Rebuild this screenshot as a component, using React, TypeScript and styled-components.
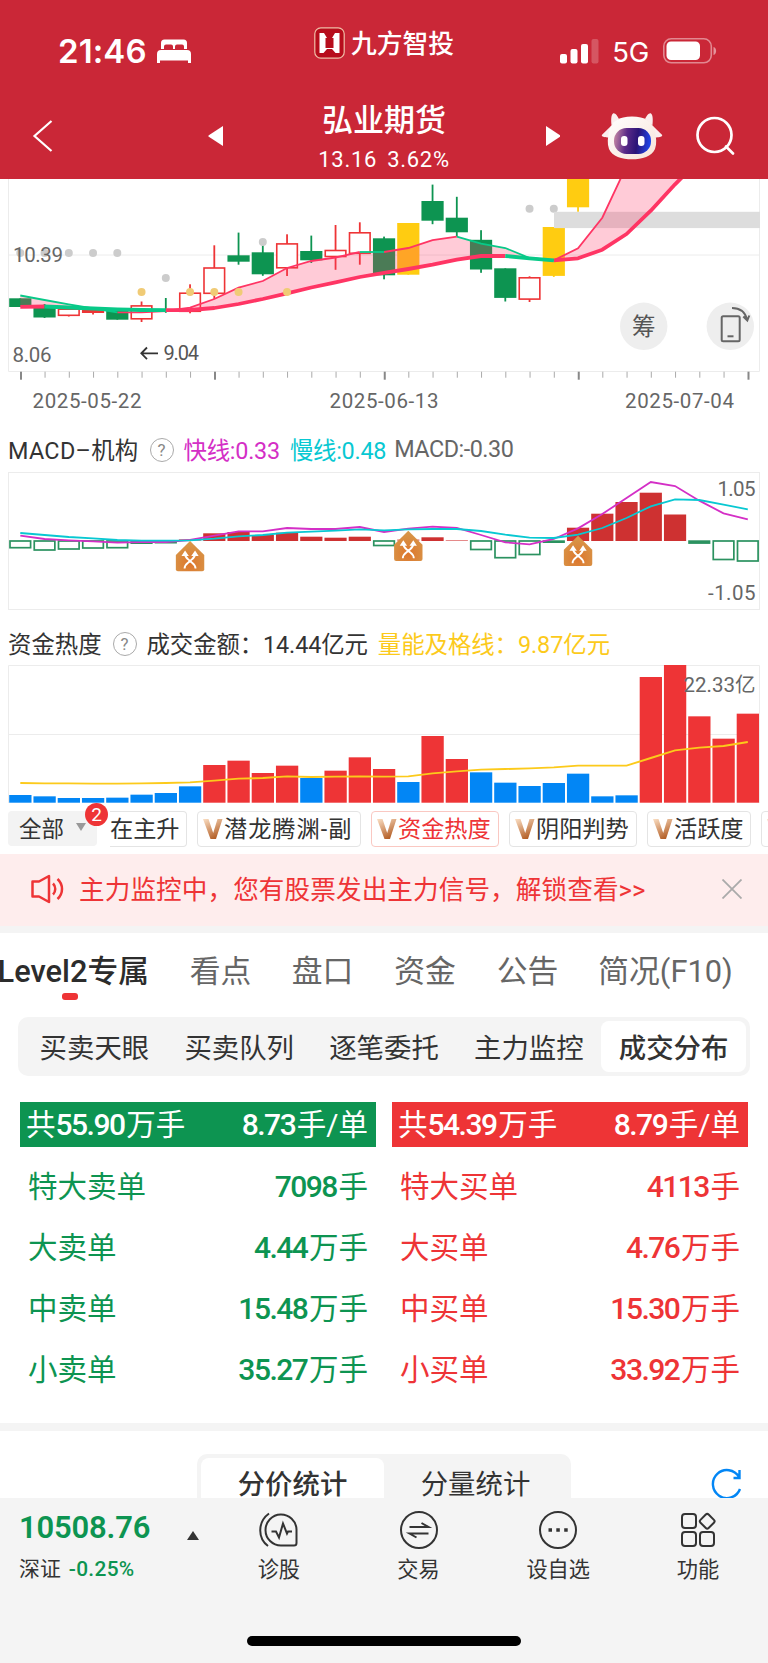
import React from 'react';
import styled, { createGlobalStyle } from 'styled-components';

const GlobalStyle = createGlobalStyle`
    * { box-sizing: border-box; }
    body {
        margin: 0;
        background: #fff;
        color: #333;
        font-family: Roboto, "Noto Sans CJK SC", sans-serif;
    }
    svg { display: block; flex-shrink: 0; }
`;

const GREEN = '#0d9451';
const RED = '#ee3436';
const PINK = '#ff3564';
const MINT = '#08c988';

// x of the center of bar i, shared by the three charts
const cx = (i: number) => 20.3 + i * 24.25;

type Candle = { c: string; top: number; bottom: number; high: number; low: number };

const candle = (c: string, top: number, bottom: number, high: number, low: number): Candle => ({ c, top, bottom, high, low });

const candles: Candle[] = [
    candle('g', 298.3, 307, 298.3, 307),
    candle('g', 308, 317.5, 304, 318),
    candle('r', 309, 315.5, 309, 316.5),
    candle('r', 310.6, 312.4, 308, 314.5),
    candle('g', 311, 319.7, 311, 319.7),
    candle('r', 305.7, 319, 301.5, 322),
    candle('g', 309, 310.5, 298, 312.8),
    candle('r', 293, 311.5, 284.3, 313.3),
    candle('r', 267.8, 293.5, 245.3, 299),
    candle('g', 255.3, 261.7, 232.6, 264.7),
    candle('g', 252.3, 274.3, 243.3, 275.8),
    candle('r', 243.7, 268, 234.3, 276),
    candle('g', 251, 260.3, 235.6, 263),
    candle('r', 250.3, 256.7, 225, 269.8),
    candle('r', 232.6, 253.5, 222.3, 264.7),
    candle('g', 238.3, 275.3, 236.6, 279.3),
    candle('y', 223, 274.7, 223, 274.7),
    candle('g', 201, 220.7, 184.6, 224.2),
    candle('g', 217.7, 232.3, 196.8, 236.5),
    candle('g', 239.8, 269.5, 230.2, 272.8),
    candle('g', 268.3, 297.9, 268.3, 301.5),
    candle('r', 277.6, 299.3, 276.3, 302),
    candle('y', 227, 275.9, 227, 276.9),
    candle('y', 179, 207.3, 179, 211.8),
];

const fastBand = [295.5, 300, 304.3, 308.5, 312.3, 312.3, 311, 307.7, 299, 287.7, 281, 268, 261, 257.5, 252, 252, 248, 240.2, 236.7, 243.7, 248, 258, 260.3, 248.3, 217.7, 166];
const slowBand = [306.9, 306.5, 307.5, 308.5, 309.3, 310, 310.2, 310, 308, 304, 299, 293.3, 287.5, 282.3, 277, 272.8, 269, 264.7, 259.7, 256, 256, 258.3, 260.3, 258.3, 249.7, 234, 210.7, 184.3, 160];

const path = (ys: number[], from = 0, to = ys.length - 1) =>
    ys.slice(from, to + 1).map((y, k) => `${k ? 'L' : 'M'}${cx(from + k)} ${y}`).join(' ');

const area = (from: number, to: number) => {
    let d = path(fastBand, from, Math.min(to, fastBand.length - 1));
    for (let i = Math.min(to, slowBand.length - 1); i >= from; i--) d += ` L${cx(i)} ${slowBand[i]}`;
    return d + ' Z';
};

const candleColor = (c: string) => (c === 'g' ? GREEN : c === 'y' ? '#ffcc11' : RED);

const KLineChart = () => (
    <svg width="768" height="249" viewBox="0 179 768 249">
        <path d="M8.5 179V371.5H759.5V179M8.5 255H759.5" fill="none" stroke="#ececec" />
        {[0, 1, 2, 3, 4].map(i => <circle key={i} cx={cx(i)} cy="253" r="4" fill="#ccc" />)}
        <circle cx={cx(6)} cy="278" r="4" fill="#ccc" />
        <circle cx={cx(21)} cy="208.8" r="4" fill="#ccc" />
        <circle cx={cx(22)} cy="208.8" r="4" fill="#ccc" />
        <text x="13" y="262" fontSize="20.5" fill="#666" textLength="50">10.39</text>
        {candles.map((k, i) => (
            <g key={i}>
                <rect x={cx(i) - 0.9} y={k.high} width="1.8" height={k.low - k.high} fill={candleColor(k.c)} />
                {k.c === 'r' ? (
                    <rect x={cx(i) - 10.3} y={k.top + 0.2} width="20.6" height={k.bottom - k.top - 0.4} fill="#fff" stroke={RED} strokeWidth="1.6" />
                ) : (
                    i !== 6 && <rect x={cx(i) - 11.1} y={k.top} width="22.2" height={k.bottom - k.top} fill={candleColor(k.c)} />
                )}
            </g>
        ))}
        <circle cx={cx(10)} cy="242" r="4" fill="#ccc" />
        <rect x="554" y="211.8" width="206" height="16.3" fill="#ddd" />
        <path d={area(0, 3)} fill={PINK} fillOpacity=".26" />
        <path d={area(6, 22)} fill={PINK} fillOpacity=".26" />
        <path d={area(22, 28)} fill={PINK} fillOpacity=".26" />
        <g fill="none" strokeWidth="1.8">
            <path d={path(fastBand, 4, 14)} stroke={PINK} />
            <path d={path(fastBand, 15, 18)} stroke={PINK} />
            <path d={path(fastBand, 22)} stroke={PINK} />
            <path d={path(fastBand, 0, 4)} stroke={MINT} />
            <path d={path(fastBand, 14, 15)} stroke={MINT} />
            <path d={path(fastBand, 18, 22)} stroke={MINT} />
        </g>
        <g fill="none" strokeWidth="3.8" strokeLinejoin="round">
            <path d={path(slowBand, 0, 1)} stroke={PINK} />
            <path d={path(slowBand, 6, 20)} stroke={PINK} />
            <path d={path(slowBand, 22)} stroke={PINK} />
            <path d={path(slowBand, 1, 6)} stroke={MINT} />
            <path d={path(slowBand, 20, 22)} stroke={MINT} />
        </g>
        {[5, 7, 8, 9, 11].map(i => <circle key={i} cx={cx(i)} cy="292" r="4" fill="#f0cb76" />)}
        <g fill="#666" fontSize="20.5">
            <text x="12.5" y="361.5" textLength="39">8.06</text>
            <text x="163.5" y="360" fill="#555" fontSize="20" textLength="35.5">9.04</text>
            <text x="32.5" y="408" textLength="109">2025-05-22</text>
            <text x="329.5" y="408" textLength="109">2025-06-13</text>
            <text x="625" y="408" textLength="109">2025-07-04</text>
        </g>
        <path d="M158 353.3H141.5M147 347.5l-5.7 5.8 5.7 5.8" fill="none" stroke="#333" strokeWidth="1.8" />
        {Array.from({ length: 31 }, (_, i) => (
            [0, 8, 15, 23, 30].includes(i)
                ? <rect key={i} x={cx(i) - 0.3} y="371.7" width="2" height="8" fill="#888" />
                : <rect key={i} x={cx(i)} y="371.7" width="1" height="6" fill="#aaa" />
        ))}
        <circle cx="643.7" cy="326.3" r="23.7" fill="#eee" />
        <text x="643.7" y="334.8" fontSize="23.5" fill="#555" textAnchor="middle">筹</text>
        <circle cx="730.3" cy="326.3" r="23.7" fill="#eee" />
        <g fill="none" stroke="#666" strokeWidth="2">
            <rect x="721.7" y="316.2" width="18" height="25" rx="1.5" />
            <path d="M727.5 336.3h6" />
            <path d="M732 308c7.5 0 13 3.5 15 11.5M743.3 316.5l4 4 2-5" />
        </g>
    </svg>
);

// y of the bar's far end and its kind: g hollow green, G solid green, r red, p pale red
const macdBars: [number, string][] = [
    [547.7, 'g'], [550, 'g'], [549, 'g'], [548, 'g'], [547.7, 'g'], [544, 'G'], [543.5, 'G'], [539, 'p'],
    [533.3, 'r'], [532, 'r'], [535, 'r'], [532.7, 'r'], [536.7, 'r'], [537.7, 'r'], [536.7, 'r'], [545.5, 'g'],
    [539.3, 'p'], [537.3, 'r'], [540, 'p'], [549.5, 'g'], [557.7, 'g'], [554.5, 'g'], [543, 'G'], [527.7, 'r'],
    [513.7, 'r'], [502, 'r'], [492.7, 'r'], [514.5, 'r'], [543.9, 'G'], [559.5, 'g'], [561, 'g'],
];
const scaled = (values: number[], top: number) => values.map(v => top + v / 3);
const macdFast = scaled([332, 342, 346, 349, 353, 351, 351, 345, 332, 319, 319, 309, 312, 312, 306, 321, 311, 305, 309, 330, 352, 358, 342, 310, 267, 219, 171, 183, 227, 265, 283], 425);
const macdSlow = scaled([324, 330, 336, 340, 345, 347, 347, 346, 341, 334, 330, 323, 320, 317, 313, 316, 313, 312, 312, 318, 329, 338, 339, 329, 309, 279, 244, 223, 225, 239, 253], 425);

const CrossMark = ({ i, y }: { i: number; y: number }) => (
    <g transform={`translate(${cx(i)} ${y})`}>
        <path d="M0 0L14.2 14V28.3a2 2 0 0 1-2 2H-12.2a2 2 0 0 1-2-2V14Z" fill="url(#cross)" />
        <path d="M-5.5 27.5C-5.5 23-2 22 0 20S5 17 5 13M5.5 27.5C5.5 23 2 22 0 20S-5 17-5 13" fill="none" stroke="#fff" strokeWidth="1.9" />
        <path d="M-5 9.5l3.8 5.5h-7.4zM5 9.5l3.6 5.5h-7.4z" fill="#fff" />
    </g>
);

const MacdChart = () => (
    <svg width="768" height="150" viewBox="0 472 768 150">
        <defs>
            <radialGradient id="cross" cx="50%" cy="75%" r="70%">
                <stop offset="0" stopColor="#de762c" />
                <stop offset="1" stopColor="#d7974a" />
            </radialGradient>
        </defs>
        <rect x="8.5" y="472.5" width="751" height="137" fill="none" stroke="#ececec" />
        {macdBars.map(([y, kind], i) => {
            if (kind === 'g') return <rect key={i} x={cx(i) - 10.3} y="541" width="20.6" height={y - 541} fill="#fff" stroke="#2b9260" strokeWidth="1.7" />;
            if (kind === 'G') return <rect key={i} x={cx(i) - 11.1} y="540.3" width="22.2" height={y - 540.3} fill="#2b9260" />;
            return <rect key={i} x={cx(i) - 11.1} y={y} width="22.2" height={541 - y} fill={kind === 'p' ? '#e58a8a' : '#ce3131'} />;
        })}
        <path d={path(macdFast)} fill="none" stroke="#d42fc6" strokeWidth="1.8" />
        <path d={path(macdSlow)} fill="none" stroke="#08c8d2" strokeWidth="1.8" />
        <CrossMark i={7} y={541} />
        <CrossMark i={16} y={530.8} />
        <CrossMark i={23} y={535.8} />
        <g fill="#666" fontSize="20.5">
            <text x="717.5" y="495.5" textLength="38">1.05</text>
            <text x="708" y="600" textLength="47.5">-1.05</text>
        </g>
    </svg>
);

const fundTops = scaled([525, 529, 534, 534, 533, 524, 519, 499, 435, 422, 459, 437, 474, 452, 412, 447, 486, 348, 417, 457, 488, 498, 489, 461, 529, 526, 171, 135, 289, 356, 281], 620);
const fundLine = scaled([489, 490, 490, 491, 491, 490, 489, 487, 482, 476, 474, 469, 471, 470, 469, 470, 469, 460, 454, 449, 447, 445, 442, 437, 437, 437, 414, 391, 383, 378, 366], 620);
const outflowDays = [0, 1, 2, 3, 4, 5, 6, 7, 12, 16, 19, 20, 21, 22, 23, 24, 25];

const FundChart = () => (
    <svg width="768" height="141" viewBox="0 665 768 141">
        <path d="M8.5 803V665.5H759.5V803M8.5 734.5H759.5" fill="none" stroke="#ececec" />
        {fundTops.map((y, i) => (
            <rect key={i} x={cx(i) - 11.1} y={y} width="22.3" height={802.7 - y} fill={outflowDays.includes(i) ? '#0286f5' : RED} />
        ))}
        <path d={path(fundLine)} fill="none" stroke="#fcca1b" strokeWidth="1.9" />
        <text x="683.5" y="692" fontSize="20.5" fill="#666" textLength="72">22.33亿</text>
    </svg>
);

const Header = styled.header`
    height: 179px;
    background: #ca2737;
    color: #fff;
`;

const StatusBar = styled.div`
    display: flex;
    height: 92px;
    padding: 10px 51px 0 58px;
    align-items: center;
    justify-content: space-between;
`;

const Clock = styled.div`
    display: flex;
    width: 250px;
    align-items: center;
    gap: 10px;
    font-family: Inter, sans-serif;
    font-size: 33px;
    font-weight: 600;
    letter-spacing: 0.1px;
`;

const Brand = styled.div`
    display: flex;
    align-items: center;
    gap: 6px;
    margin-bottom: 17px;
    font-size: 25.8px;
    line-height: 30px;
    font-weight: 500;
    span {
        margin-top: 2px;
    }
`;

const Signal = styled.div`
    display: flex;
    width: 257px;
    justify-content: flex-end;
    align-items: center;
    font-family: Inter, sans-serif;
    font-size: 27.5px;
    letter-spacing: -0.3px;
    span {
        margin: 2px 14px 0 13px;
    }
`;

const NavBar = styled.div`
    display: grid;
    grid-template-columns: 32px 149px 15px 322px 15px 41px 62px 33px 40px;
    height: 87px;
    padding-left: 27px;
    align-items: center;
`;

const StockTitle = styled.div`
    display: flex;
    flex-direction: column;
    align-items: center;
    padding-top: 6px;
`;

const StockName = styled.div`
    font-size: 31px;
    line-height: 38px;
    font-weight: 500;
`;

const StockPrice = styled.div`
    height: 36px;
    font-size: 22px;
    line-height: 39px;
    word-spacing: 4px;
    letter-spacing: 0.7px;
    white-space: nowrap;
`;

const IndicatorHead = styled.div<{ $height: number }>`
    display: flex;
    height: ${(props) => props.$height}px;
    padding: 0 0 2px 8px;
    align-items: center;
    font-size: 23.4px;
    white-space: nowrap;
`;

const Help = styled.span<{ $left: number }>`
    display: flex;
    width: 24px;
    height: 24px;
    margin: 2px 10px 0 ${(props) => props.$left}px;
    align-items: center;
    justify-content: center;
    border: 1.5px solid #aaa;
    border-radius: 50%;
    color: #888;
    font-size: 17px;
`;

const Reading = styled.span<{ $color?: string; $gap?: number; $spacing?: number }>`
    margin-right: ${(props) => props.$gap ?? 10}px;
    color: ${(props) => props.$color ?? '#333'};
    letter-spacing: ${(props) => props.$spacing ?? 0}px;
`;

const ChipBar = styled.div`
    position: relative;
    display: flex;
    height: 48px;
    padding: 5px 0 0 8px;
`;

const AllButton = styled.div`
    display: flex;
    width: 89px;
    height: 35px;
    padding: 0 0 3px 11px;
    align-items: center;
    gap: 12px;
    border-radius: 4px;
    background: #f3f3f3;
    font-size: 22.5px;
`;

const Badge = styled.span`
    position: absolute;
    left: 85px;
    top: -3px;
    width: 23px;
    height: 23px;
    border-radius: 50%;
    background: ${RED};
    color: #fff;
    font-size: 19px;
    line-height: 23px;
    text-align: center;
`;

const ChipScroller = styled.div`
    display: flex;
    flex: 1;
    overflow: hidden;
    padding-left: 13px;
    gap: 10px;
`;

const Chip = styled.div<{ $width: number; $active?: boolean; $cut?: boolean; $spacing?: number }>`
    display: flex;
    flex-shrink: 0;
    width: ${(props) => props.$width}px;
    height: 36px;
    padding: 0 0 4px ${(props) => (props.$cut ? 0 : 5)}px;
    align-items: center;
    gap: 1px;
    border: 1.5px solid ${(props) => (props.$active ? '#fac8c2' : '#e4e4e4')};
    ${(props) => props.$cut && 'border-left: 0;'}
    border-radius: ${(props) => (props.$cut ? '0 4px 4px 0' : '4px')};
    color: ${(props) => (props.$active ? RED : '#333')};
    font-size: 23.2px;
    letter-spacing: ${(props) => props.$spacing ?? 0}px;
    white-space: nowrap;
    svg {
        margin-top: 3px;
    }
`;

const Notice = styled.div`
    display: flex;
    height: 78.5px;
    padding: 0 26px 1px 31px;
    align-items: center;
    border-bottom: 7.5px solid #f4f4f4;
    background: #feeded;
    color: ${RED};
`;

const NoticeText = styled.div`
    flex: 1;
    margin: -3px 0 0 14px;
    font-size: 25.6px;
    letter-spacing: 0.1px;
    white-space: nowrap;
`;

const TabBar = styled.div`
    display: flex;
    height: 84.5px;
    overflow: hidden;
`;

const Tab = styled.div<{ $width: number; $active?: boolean }>`
    position: relative;
    flex-shrink: 0;
    display: flex;
    width: ${(props) => props.$width}px;
    height: 72px;
    align-items: center;
    justify-content: ${(props) => (props.$active ? 'flex-end' : 'center')};
    color: ${(props) => (props.$active ? '#2c2c2c' : '#666')};
    font-size: 30.8px;
    font-weight: ${(props) => (props.$active ? 500 : 400)};
    white-space: nowrap;
`;

const TabMark = styled.span`
    position: absolute;
    left: 62px;
    bottom: 5px;
    width: 16px;
    height: 6.5px;
    border-radius: 3px;
    background: ${RED};
`;

const Segment = styled.div`
    display: flex;
    height: 59px;
    margin: 0 18px;
    padding: 4px;
    border-radius: 10px;
    background: #f4f4f4;
`;

const SegmentItem = styled.div<{ $active?: boolean; $width?: number }>`
    display: flex;
    flex: ${(props) => (props.$width ? 'none' : '1')};
    width: ${(props) => (props.$width ? props.$width + 'px' : 'auto')};
    align-items: center;
    justify-content: center;
    padding-bottom: 1px;
    border-radius: 8px;
    background: ${(props) => (props.$active ? '#fff' : 'transparent')};
    color: #333;
    font-size: 27.4px;
    font-weight: ${(props) => (props.$active ? 500 : 400)};
    white-space: nowrap;
`;

const Distribution = styled.div`
    display: grid;
    grid-template-columns: 356px 356px;
    gap: 16px;
    height: 355px;
    padding: 26px 0 0 20px;
    border-bottom: 8px solid #f4f4f4;
`;

const Side = styled.div<{ $color: string }>`
    color: ${(props) => props.$color};
`;

const SideHead = styled.div<{ $color: string }>`
    display: flex;
    height: 45px;
    padding: 0 8px 0 6px;
    align-items: center;
    justify-content: space-between;
    background: ${(props) => props.$color};
    color: #fff;
    font-size: 29.5px;
    line-height: 41px;
    white-space: nowrap;
`;

const OrderRow = styled.div`
    display: flex;
    height: 61px;
    padding: 0 8px;
    align-items: center;
    justify-content: space-between;
    font-size: 29.5px;
    &:nth-child(2) {
        margin-top: 6px;
    }
`;

const Digits = styled.span`
    margin-right: 1.6px;
    font-size: 30px;
    font-weight: 500;
    letter-spacing: -1.5px;
`;

const StatsHead = styled.div`
    display: flex;
    height: 67px;
    padding: 23px 25px 0 197px;
    justify-content: space-between;
    overflow: hidden;
`;

const StatsSegment = styled.div`
    display: flex;
    width: 374px;
    height: 57px;
    padding: 4px;
    border-radius: 10px;
    background: #f4f4f4;
`;

const RefreshIcon = styled.svg`
    margin-top: 13px;
`;

const BottomBar = styled.footer`
    display: flex;
    flex-direction: column;
    height: 165px;
    background: #f4f4f4;
`;

const BottomRow = styled.div`
    display: flex;
    height: 138px;
`;

const IndexBox = styled.div`
    display: flex;
    width: 209px;
    padding: 14px 10px 0 19px;
    justify-content: space-between;
`;

const IndexValue = styled.div`
    color: ${GREEN};
    font-size: 31px;
    line-height: 32px;
    font-weight: 600;
    letter-spacing: -0.2px;
`;

const IndexName = styled.div`
    display: flex;
    margin-top: 9px;
    align-items: center;
    gap: 8px;
    font-size: 20.9px;
    line-height: 32px;
    span {
        color: ${GREEN};
        font-weight: 500;
        letter-spacing: 0.3px;
    }
`;

const UpMark = styled.svg`
    margin-top: 19px;
`;

const Action = styled.div`
    display: flex;
    flex-direction: column;
    width: 139.7px;
    padding-top: 12px;
    align-items: center;
    gap: 4px;
    font-size: 21.2px;
    line-height: 31px;
    svg {
        fill: none;
        stroke: #333;
        stroke-width: 2;
    }
`;

const HomeIndicator = styled.div`
    width: 274px;
    height: 10px;
    margin: 0 auto;
    border-radius: 5px;
    background: #000;
`;

const VipMark = () => (
    <svg width="20" height="20" viewBox="0 0 20 20">
        <defs>
            <linearGradient id="vip" x1="0" y1="0" x2="0.5" y2="1">
                <stop offset="0" stopColor="#fbdfc4" />
                <stop offset="1" stopColor="#b5622a" />
            </linearGradient>
        </defs>
        <path d="M0 0h5.5l4.7 14L14.5 0h5L13 20H7.500z" fill="url(#vip)" />
    </svg>
);

const Robot = () => (
    <svg width="62" height="48" viewBox="0 0 62 48">
        <defs>
            <linearGradient id="face" x1="0" y1="0.2" x2="1" y2="0.3">
                <stop offset="0" stopColor="#c88aa5" />
                <stop offset=".35" stopColor="#5a2a88" />
                <stop offset=".65" stopColor="#2b1477" />
                <stop offset="1" stopColor="#1f45e8" />
            </linearGradient>
            <linearGradient id="shell" x1="0" y1="0" x2="1" y2="1">
                <stop offset="0" stopColor="#fff" />
                <stop offset="1" stopColor="#f7e3d8" />
            </linearGradient>
        </defs>
        <path d="M10.5 13C10 8 10 3 12 1.5c2-1 4.5 2.5 6 5.5zM51.5 13c.5-5 .5-10-1.5-11.5-2-1-4.5 2.5-6 5.5zM10 14L.8 23c-.5 2 5 3 9 2zM52 14l9.2 9c.5 2-5 3-9 2z" fill="#fbeeee" />
        <path d="M31 4.5c13 0 21 5 23 15 1.200 6 2 12 0 17.500C51 44.5 41 47.3 31 47.3S11 44.5 8 37c-2-5.500-1.200-11.500 0-17.500 2-10 10-15 23-15z" fill="url(#shell)" />
        <rect x="13" y="16" width="37" height="26" rx="12.5" fill="url(#face)" />
        <rect x="20" y="24" width="6.5" height="10" rx="3" fill="#fff" />
        <rect x="37" y="24" width="6.5" height="10" rx="3" fill="#fff" />
    </svg>
);

const sellRows = [['特大卖单', '7098', '手'], ['大卖单', '4.44', '万手'], ['中卖单', '15.48', '万手'], ['小卖单', '35.27', '万手']];
const buyRows = [['特大买单', '4113', '手'], ['大买单', '4.76', '万手'], ['中买单', '15.30', '万手'], ['小买单', '33.92', '万手']];

type OrderSideProps = {
    color: string;
    total: string;
    average: string;
    rows: string[][];
};

const OrderSide = ({ color, total, average, rows }: OrderSideProps) => (
    <Side $color={color}>
        <SideHead $color={color}>
            <div>共<Digits>{total}</Digits>万手</div>
            <div><Digits>{average}</Digits>手/单</div>
        </SideHead>
        {rows.map(([label, value, unit]) => (
            <OrderRow key={label}>
                <div>{label}</div>
                <div><Digits>{value}</Digits>{unit}</div>
            </OrderRow>
        ))}
    </Side>
);

const App = () => (
    <>
        <GlobalStyle />
        <Header>
            <StatusBar>
                <Clock>
                    21:46
                    <svg width="34" height="24" viewBox="0 0 34 24" fill="#fff">
                        <path d="M4 10V4a3.5 3.5 0 0 1 3.5-3.5h19A3.5 3.5 0 0 1 30 4v6h-3V7.5a2 2 0 0 0-2-2h-5a2 2 0 0 0-2 2V10h-2V7.5a2 2 0 0 0-2-2H9a2 2 0 0 0-2 2V10z" />
                        <path d="M0 24V15a4 4 0 0 1 4-4h26a4 4 0 0 1 4 4v9h-3v-2.5H3V24z" />
                    </svg>
                </Clock>
                <Brand>
                    <svg width="31" height="32" viewBox="0 0 31 32">
                        <rect x=".8" y=".8" width="29.4" height="30.4" rx="6" fill="#b70d1c" stroke="#f0bfa8" strokeWidth="1.2" />
                        <path d="M5.500 6h4.5l3 5h5l3-5h4.5v20h-4l-3.5-4h-5l-3.5 4h-4zM11.5 11v10h8V11z" fill="#fff" fillRule="evenodd" />
                    </svg>
                    <span>九方智投</span>
                </Brand>
                <Signal>
                    <svg width="39" height="25" viewBox="0 0 39 25" fill="#fff">
                        <rect x="0" y="15" width="7" height="9.5" rx="2" />
                        <rect x="10.5" y="10" width="7" height="14.5" rx="2" />
                        <rect x="21" y="5" width="7" height="19.5" rx="2" />
                        <rect x="31.5" y="0" width="7" height="24.5" rx="2" opacity=".22" />
                    </svg>
                    <span>5G</span>
                    <svg width="54" height="26" viewBox="0 0 54 26">
                        <rect x=".8" y=".8" width="47.5" height="24" rx="7.5" fill="none" stroke="#fff" strokeOpacity=".45" strokeWidth="1.6" />
                        <rect x="3.5" y="3.5" width="33.5" height="18.5" rx="4.5" fill="#fff" />
                        <path d="M50.5 9c3.5 1 3.5 7 0 8z" fill="#fff" fillOpacity=".5" />
                    </svg>
                </Signal>
            </StatusBar>
            <NavBar>
                <svg width="32" height="32" viewBox="0 0 32 32">
                    <path d="M24.5 1L7.5 16l17 15" fill="none" stroke="#fff" strokeWidth="2.2" />
                </svg>
                <span />
                <svg width="15" height="22" viewBox="0 0 15 22">
                    <path d="M15 1v20L.8 11.8q-1-.8 0-1.6z" fill="#fff" />
                </svg>
                <StockTitle>
                    <StockName>弘业期货</StockName>
                    <StockPrice>13.16 3.62%</StockPrice>
                </StockTitle>
                <svg width="15" height="22" viewBox="0 0 15 22">
                    <path d="M1 1v20l14-9.2q1-.8 0-1.6z" fill="#fff" />
                </svg>
                <span />
                <Robot />
                <span />
                <svg width="40" height="40" viewBox="0 0 40 40" fill="none" stroke="#fff" strokeWidth="2.7">
                    <circle cx="18.5" cy="19" r="17" />
                    <path d="M30 30.500l7 7" strokeLinecap="round" />
                </svg>
            </NavBar>
        </Header>

        <KLineChart />

        <IndicatorHead $height={44}>
            <Reading $gap={0} $spacing={0.3}>MACD–机构</Reading>
            <Help $left={11}>?</Help>
            <Reading $color="#d42fc6" $spacing={-0.25}>快线:0.33</Reading>
            <Reading $color="#08c8d2" $gap={8} $spacing={-0.25}>慢线:0.48</Reading>
            <Reading $color="#666" $spacing={-0.5}>MACD:-0.30</Reading>
        </IndicatorHead>
        <MacdChart />

        <IndicatorHead $height={43}>
            <Reading $gap={0}>资金热度</Reading>
            <Help $left={11}>?</Help>
            <Reading $spacing={-0.1}>成交金额：14.44亿元</Reading>
            <Reading $color="#fcca1b" $spacing={-0.05}>量能及格线：9.87亿元</Reading>
        </IndicatorHead>
        <FundChart />

        <ChipBar>
            <AllButton>
                全部
                <svg width="10" height="8" viewBox="0 0 10 8"><path d="M0 0h10L5 8z" fill="#999" /></svg>
            </AllButton>
            <Badge>2</Badge>
            <ChipScroller>
                <Chip $width={77} $cut>在主升</Chip>
                <Chip $width={164} $spacing={1}><VipMark />潜龙腾渊-副</Chip>
                <Chip $width={128} $active><VipMark />资金热度</Chip>
                <Chip $width={128}><VipMark />阴阳判势</Chip>
                <Chip $width={104}><VipMark />活跃度</Chip>
                <Chip $width={104}><VipMark /></Chip>
            </ChipScroller>
        </ChipBar>

        <Notice>
            <svg width="34" height="30" viewBox="0 0 34 30" fill="none" stroke={RED} strokeWidth="2.5">
                <path d="M1.5 7.5h6.5L18 2v26L8 22.5H1.500z" strokeLinejoin="round" />
                <path d="M22 9.500c3 3 3 8 0 11M26.5 5c6 5.5 6 14.5 0 20" />
            </svg>
            <NoticeText>主力监控中，您有股票发出主力信号，解锁查看&gt;&gt;</NoticeText>
            <svg width="20" height="20" viewBox="0 0 20 20" stroke="#aaa" strokeWidth="1.8">
                <path d="M.5.5l19 19M19.5.5l-19 19" />
            </svg>
        </Notice>

        <TabBar>
            <Tab $width={149} $active>Level2专属<TabMark /></Tab>
            <Tab $width={143}>看点</Tab>
            <Tab $width={61}>盘口</Tab>
            <Tab $width={144}>资金</Tab>
            <Tab $width={61}>公告</Tab>
            <Tab $width={215}>简况(F10)</Tab>
        </TabBar>

        <Segment>
            <SegmentItem>买卖天眼</SegmentItem>
            <SegmentItem>买卖队列</SegmentItem>
            <SegmentItem>逐笔委托</SegmentItem>
            <SegmentItem>主力监控</SegmentItem>
            <SegmentItem $active>成交分布</SegmentItem>
        </Segment>

        <Distribution>
            <OrderSide color={GREEN} total="55.90" average="8.73" rows={sellRows} />
            <OrderSide color={RED} total="54.39" average="8.79" rows={buyRows} />
        </Distribution>

        <StatsHead>
            <StatsSegment>
                <SegmentItem $active $width={183}>分价统计</SegmentItem>
                <SegmentItem $width={183}>分量统计</SegmentItem>
            </StatsSegment>
            <RefreshIcon width="32" height="34" viewBox="0 0 32 34" fill="none" stroke="#0286f5" strokeWidth="2.4">
                <path d="M29 22A14 14 0 1 1 28 10M28.5 3v8h-6" />
            </RefreshIcon>
        </StatsHead>

        <BottomBar>
            <BottomRow>
                <IndexBox>
                    <div>
                        <IndexValue>10508.76</IndexValue>
                        <IndexName>深证<span>-0.25%</span></IndexName>
                    </div>
                    <UpMark width="12" height="9" viewBox="0 0 12 9"><path d="M6 0l6 9H0z" fill="#333" /></UpMark>
                </IndexBox>
                <Action>
                    <svg width="40" height="40" viewBox="0 0 40 40">
                        <path d="M10 3.5C-1.5 12-1.5 28 9 36" />
                        <path d="M37.5 33V19.5a15.5 15.5 0 1 0-15.5 16h13a2.5 2.5 0 0 0 2.5-2.5z" />
                        <path d="M12.5 21.5h4.5l3 6 4-14 4 10 1-2h4" />
                    </svg>
                    诊股
                </Action>
                <Action>
                    <svg width="40" height="40" viewBox="0 0 40 40">
                        <circle cx="20" cy="20" r="18" />
                        <path d="M10.5 17h19l-7-4M29.5 23.5h-19l7 4" />
                    </svg>
                    交易
                </Action>
                <Action>
                    <svg width="40" height="40" viewBox="0 0 40 40">
                        <circle cx="20" cy="20" r="18" />
                        <path d="M10.5 20h3.5M18.3 20h3.5M26.2 20h3.5" strokeWidth="3.5" />
                    </svg>
                    设自选
                </Action>
                <Action>
                    <svg width="40" height="40" viewBox="0 0 40 40">
                        <rect x="4" y="4" width="14" height="14" rx="3" />
                        <rect x="4" y="22" width="14" height="14" rx="3" />
                        <rect x="22" y="22" width="14" height="14" rx="3" />
                        <rect x="23.5" y="5.5" width="11.5" height="11.5" rx="2" transform="rotate(45 29.2 11.2)" />
                    </svg>
                    功能
                </Action>
            </BottomRow>
            <HomeIndicator />
        </BottomBar>
    </>
);

export default App;
